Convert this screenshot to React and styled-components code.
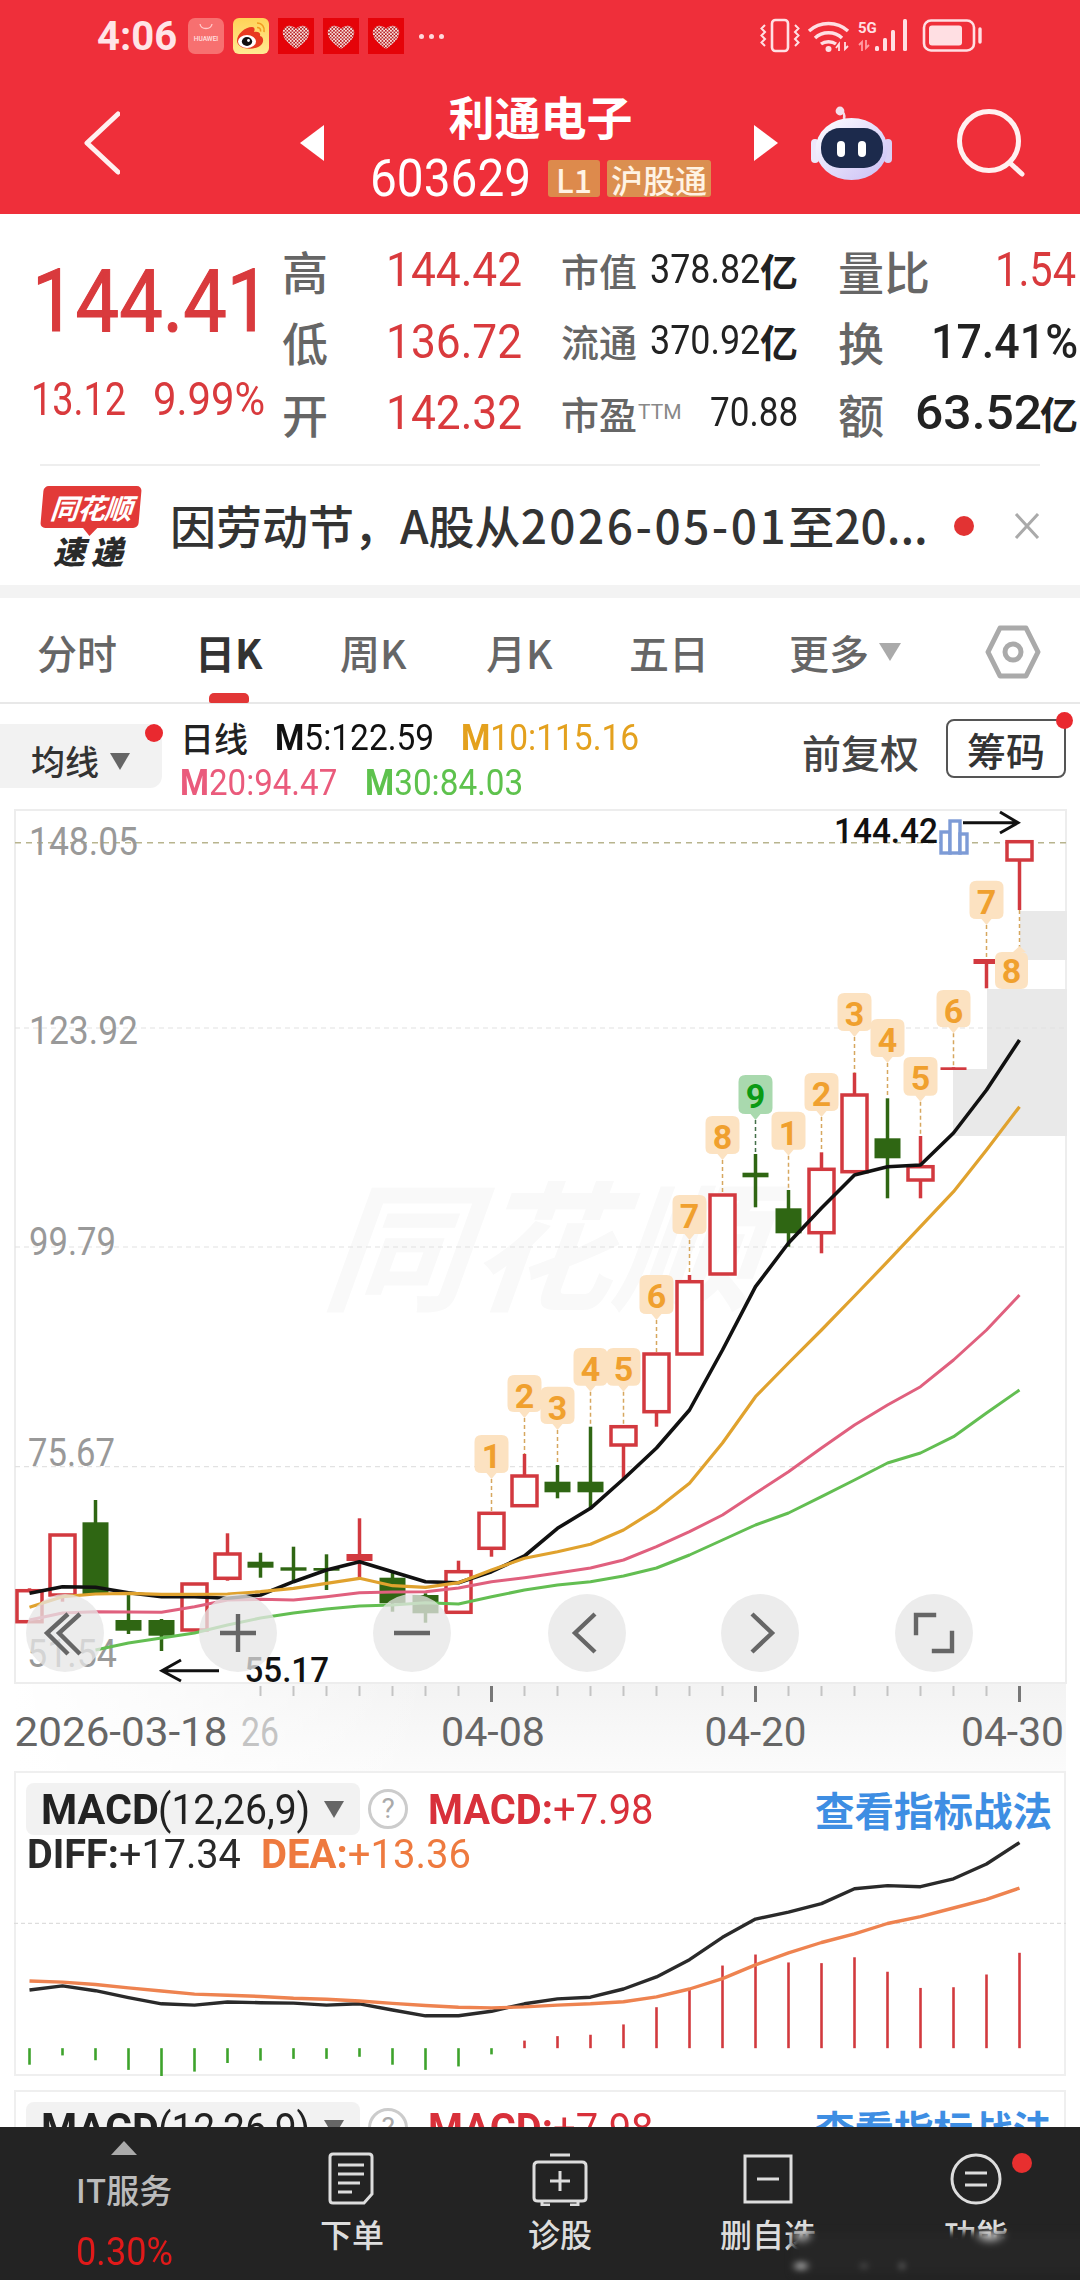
import React from 'react';
import styled, { createGlobalStyle } from 'styled-components';

const NUM = `Roboto, "Noto Sans CJK SC", sans-serif`;
const CJK = `"Noto Sans CJK SC", Roboto, sans-serif`;
const RED = '#D93A3D';

const GlobalStyle = createGlobalStyle`
  html, body { margin: 0; padding: 0; background: #fff; }
  #root { width: 1080px; height: 2280px; overflow: hidden; }
  * { box-sizing: border-box; }
`;

// Roboto advance widths, used to squeeze tall digits into the reference's narrow DIN-like widths.
const ADV = { '.': .263, ',': .196, ':': .242, '+': .568, '-': .276, '%': .732, '(': .342, ')': .348, M: .873, A: .652, C: .651, D: .656, I: .272, F: .553, E: .568 };
const measure = s => [...s].reduce((a, ch) => a + (ADV[ch] ?? .5615), 0);
const FitText = styled.span`
  display: inline-block; flex: none; width: ${p => p.$w}px; white-space: nowrap; transform-origin: left center;
  font: ${p => p.$weight || 400} ${p => p.$size}px/${p => p.$size}px ${NUM}; color: ${p => p.$c || 'inherit'};
  b { font-weight: 700; }
`;
const Fit = ({ t, w, size, c, weight, children }) => (
  <FitText $w={w} $size={size} $c={c} $weight={weight} style={{ transform: `scaleX(${(w / (measure(t) * size)).toFixed(3)})` }}>
    {children || t}
  </FitText>
);

const Page = styled.div`
  width: 1080px; height: 2280px; display: flex; flex-direction: column;
  font-family: ${CJK}; background: #fff; overflow: hidden; position: relative;
`;
const Header = styled.header`background: #EF2F3A; height: 214px; flex: none; display: flex; flex-direction: column;`;
const StatusBar = styled.div`height: 72px; display: flex; align-items: center; padding: 0 96px 0 97px;`;
const Time = styled.span`font: 700 40px Roboto, sans-serif; color: #FFE4E7; width: 91px;`;
const Notifs = styled.div`display: flex; align-items: center; gap: 9px;`;
const NotifSvg = styled.svg`display: block; width: 36px; height: 36px;`;
const MoreDots = styled.span`display: flex; gap: 5px; margin-left: 6px;
  i { display: block; width: 5px; height: 5px; border-radius: 50%; background: #FFD9DC; }`;
const StatusRight = styled.div`margin-left: auto; display: flex; align-items: center;`;
const NavBar = styled.div`height: 142px; display: flex; align-items: center; padding-left: 84px;`;
const Arrow = styled.div`
  width: 0; height: 0; border-top: 18px solid transparent; border-bottom: 18px solid transparent;
  ${p => p.$dir === 'left'
    ? 'border-right: 24px solid #fff; margin-left: 180px;'
    : 'border-left: 24px solid #fff;'}
`;
const TitleBlock = styled.div`width: 430px; align-self: stretch; display: flex; flex-direction: column; align-items: center; padding: 18px 0 0 3px;`;
const Title = styled.div`font-size: 46px; line-height: 50px; font-weight: 700; color: #fff;`;
const CodeRow = styled.div`display: flex; align-items: center; gap: 7px; margin-top: 20px; height: 37px;`;
const CodeGap = styled.i`width: 3px;`;
const Tag = styled.span`
  height: 37px; display: flex; align-items: center; justify-content: center; border-radius: 3px;
  background: ${p => p.$bg}; color: #FFF3E4; font-size: 32px; font-weight: 500; width: ${p => p.$w}px;
`;
const NavIcon = styled.svg`display: block; margin-left: ${p => p.$ml || 0}px; flex: none;`;

const Stats = styled.section`height: 252px; flex: none; display: flex; position: relative; padding-left: 31px;
  &::after { content: ''; position: absolute; left: 40px; right: 40px; bottom: 0; height: 2px; background: #EEE; }`;
const PriceCol = styled.div`width: 251px; display: flex; flex-direction: column; padding-top: 44px;`;
const PriceLine = styled.div`margin-left: 1px; -webkit-text-stroke: 1.2px ${RED}; height: 87px;`;
const PriceSub = styled.div`display: flex; gap: 27px; margin-top: 31px; color: ${RED};`;
const StatGrid = styled.div`display: grid; grid-template-rows: repeat(3, 71.5px); padding-top: 20px;`;
const StatRow = styled.div`display: flex; align-items: center;`;
const StatLabel = styled.span`font-size: 46px; font-weight: 500; color: #666; line-height: 50px; flex: none; width: ${p => p.$w || 104}px;`;
const MidCell = styled.div`width: 237px; margin-left: 39px; display: flex; align-items: center; justify-content: space-between;`;
const MidLabel = styled.span`font-size: 38px; font-weight: 500; color: #666; white-space: nowrap; line-height: 44px;
  sup { font: 400 21px ${NUM}; color: #888; vertical-align: 10px; line-height: 0; margin-left: 1px; }`;
const MidValue = styled.span`display: flex; align-items: center;`;
const MidUnit = styled.b`font: 700 38px/44px ${CJK}; color: #222;`;
const RightCell = styled.div`width: 238px; margin-left: 40px; display: flex; align-items: center; justify-content: space-between;`;
const RightValue = styled.span`display: flex; align-items: center;`;
const Unit = styled.b`font: 700 38px/44px ${CJK}; color: #222; width: 36px;`;

const News = styled.section`height: 119px; flex: none; display: flex; align-items: center; padding-left: 41px;`;
const Logo = styled.div`width: 100px; height: 80px; display: flex; flex-direction: column; align-items: center; flex: none;`;
const LogoTop = styled.div`
  width: 98px; height: 42px; background: #E23A38; border-radius: 5px; transform: skewX(-5deg); position: relative;
  color: #fff; font: italic 700 28px/42px ${CJK}; text-align: center; letter-spacing: -1px; flex: none;
  &::after { content: ''; position: absolute; left: 42px; bottom: -8px; border-top: 9px solid #E23A38;
    border-left: 8px solid transparent; border-right: 8px solid transparent; }
`;
const LogoBottom = styled.div`font: italic 900 32px/32px ${CJK}; color: #2a2a2a; margin-top: 6px; letter-spacing: 6px;`;
const NewsText = styled.div`font-size: 46px; font-weight: 500; color: #333; margin: 0 0 4px 29px; width: 765px; white-space: nowrap; line-height: 50px; flex: none;
  span { letter-spacing: 2.5px; }`;
const NewsDot = styled.i`display: block; width: 20px; height: 20px; border-radius: 50%; background: #E23333; margin-left: 19px; flex: none;`;
const NewsClose = styled.svg`display: block; margin-left: 40px; width: 26px; height: 26px; flex: none;`;
const Band = styled.div`height: 13px; background: #F3F3F3; flex: none;`;

const Tabs = styled.nav`height: 106px; position: relative; border-bottom: 2px solid #E8E8E8; flex: none;`;
const TabRow = styled.div`display: grid; grid-template-columns: 158px 145px 146px 143px 160px 196px auto; height: 104px; padding: 3px 0 0 37px; align-items: center;`;
const Tab = styled.span`font-size: 40px; color: ${p => p.$on ? '#333' : '#666'}; font-weight: ${p => p.$on ? 700 : 500}; display: flex; align-items: center; line-height: 50px;`;
const Caret = styled.i`
  display: inline-block; width: 0; height: 0; border-left: ${p => p.$s || 11}px solid transparent;
  border-right: ${p => p.$s || 11}px solid transparent;
  border-top: ${p => (p.$s || 11) * 1.7}px solid ${p => p.$c || '#AAA'}; margin-left: ${p => p.$ml || 10}px; flex: none;
`;
const Indicator = styled.i`position: absolute; left: 209px; bottom: -1px; width: 40px; height: 10px; background: #E23636; border-radius: 5px 5px 2px 2px;`;

const MARow = styled.div`height: 105px; display: flex; flex: none; position: relative;`;
const MAChip = styled.div`
  width: 162px; height: 64px; margin-top: 20px; background: #F2F2F2; border-radius: 0 12px 12px 0; display: flex; align-items: center;
  padding: 10px 0 0 31px; font-size: 34px; font-weight: 500; color: #333; position: relative; flex: none; line-height: 40px;
`;
const RedDot = styled.i`position: absolute; display: block; width: ${p => p.$s}px; height: ${p => p.$s}px; border-radius: 50%; background: #E9292F; right: ${p => p.$r}px; top: ${p => p.$t}px;`;
const MALegend = styled.div`margin-left: 18px; display: flex; flex-direction: column; padding-top: 11px;`;
const MALine = styled.div`display: flex; gap: ${p => p.$gap}px; height: 45px; align-items: center; white-space: nowrap;`;
const MAName = styled.span`font: 500 34px ${CJK}; color: #222;`;
const Adjust = styled.span`position: absolute; left: 802px; top: 22px; font-size: 39px; line-height: 50px; font-weight: 500; color: #444;`;
const ChipBtn = styled.div`position: absolute; left: 946px; top: 15px; width: 120px; height: 59px; border: 2px solid #555; border-radius: 8px; display: flex; align-items: center; justify-content: center; font-size: 39px; font-weight: 500; color: #333;`;

const ChartArea = styled.div`height: 875px; position: relative; flex: none;`;
const ChartSvg = styled.svg`display: block; width: 1080px; height: 875px;`;
const AxisLabel = styled.text`font: 400 39px ${NUM}; fill: #999;`;
const MarkLabel = styled.text`font: 500 35px Roboto, sans-serif; fill: #111;`;
const BadgeDigit = styled.text`font: 700 34px Roboto, sans-serif; fill: ${p => p.$c}; text-anchor: middle;`;
const Watermark = styled.text`font: italic 700 140px ${CJK}; fill: #F9F9F9;`;
const CircleBtn = styled.div`
  position: absolute; top: 785px; left: ${p => p.$x - 39}px; width: 78px; height: 78px; border-radius: 50%;
  background: rgba(230,230,230,.76); display: flex; align-items: center; justify-content: center;
`;

const AxisRow = styled.div`height: 87px; margin: 0 14px; flex: none;
  background: linear-gradient(90deg, #fff 0, rgba(255,255,255,0) 40%), linear-gradient(#F3F3F3, #FBFBFB);`;
const AxisSvg = styled.svg`display: block; width: 1052px; height: 87px;`;
const AxisDate = styled.text`font: 400 40px Roboto, sans-serif; fill: ${p => p.$c || '#666'};`;

const Panel = styled.section`
  margin: 0 14px ${p => p.$mb || 0}px; height: 305px; position: relative; flex: none;
  box-shadow: inset 0 0 0 2px #EFEFEF; padding: 12px 12px;
`;
const PanelSvg = styled.svg`position: absolute; left: 0; top: 0; width: 1052px; height: 305px;`;
const PanelHead = styled.div`display: flex; align-items: center; position: relative; height: 52px;`;
const MacdChip = styled.div`width: 334px; height: 52px; background: #F2F2F2; border-radius: 8px; display: flex; align-items: center; padding-left: 15px; color: #222; flex: none;`;
const Help = styled.i`width: 40px; height: 40px; border-radius: 50%; border: 3px solid #CCC; color: #AAA; margin-left: 8px; font: normal 400 28px/34px Roboto, sans-serif; text-align: center; flex: none;`;
const MacdVal = styled.span`color: #D8303A; margin-left: 20px; display: block;`;
const Link = styled.span`margin-left: auto; margin-right: 2px; font-size: 39.5px; font-weight: 700; color: #3E8EE3; line-height: 50px;`;
const LegendRow = styled.div`position: relative; display: flex; gap: 22px; height: 44px; align-items: center; margin: -2px 0 0 1px;`;

const Content = styled.main`flex: 1; overflow: hidden; display: flex; flex-direction: column; min-height: 0;`;
const BottomBar = styled.footer`height: 153px; background: #232323; display: grid; grid-template-columns: 248px repeat(4, 208px); position: relative; flex: none; overflow: hidden;`;
const SectorCol = styled.div`display: flex; flex-direction: column; align-items: center; padding-top: 14px;`;
const UpArrow = styled.i`width: 0; height: 0; flex: none; border-left: 13px solid transparent; border-right: 13px solid transparent; border-bottom: 14px solid #AAA;`;
const SectorName = styled.span`font-size: 33px; font-weight: 500; color: #BBB; line-height: 44px; margin-top: 12px;`;
const SectorPct = styled.span`height: 44px; margin-top: 19px; display: flex; align-items: center; width: 97px;`;
const BarItem = styled.div`display: flex; flex-direction: column; align-items: center; padding-top: 25px; position: relative;`;
const BarSvg = styled.svg`display: block; width: 64px; height: 54px; flex: none;`;
const BarLabel = styled.span`font-size: 32px; font-weight: 500; color: #DDD; line-height: 40px; margin-top: 7px;`;
const BarDot = styled.i`position: absolute; left: 140px; top: 26px; width: 20px; height: 20px; border-radius: 50%; background: #E82F2F;`;
const BlurPatch = styled.div`
  position: absolute; left: 792px; top: 105px; width: 300px; height: 42px; filter: blur(3px);
  background:
    radial-gradient(ellipse 18px 11px at 198px 2px, rgba(255,255,255,.85), transparent),
    radial-gradient(ellipse 13px 11px at 10px 2px, rgba(255,255,255,.75), transparent),
    radial-gradient(ellipse 10px 5px at 9px 34px, rgba(255,255,255,.9), transparent),
    radial-gradient(ellipse 5px 3px at 72px 34px, rgba(255,255,255,.4), transparent),
    radial-gradient(ellipse 3px 4px at 110px 34px, rgba(255,255,255,.7), transparent),
    #262626;
`;

const cx = i => 29.5 + 33 * i;
// [type, bodyTop, bodyBottom, wickTop, wickBottom]
const candles = [
  ['r', 1590.7, 1621.7, 1588.3, 1621.7], ['r', 1535, 1595, 1535, 1601.7], ['g', 1522.3, 1595, 1500, 1595],
  ['g', 1620, 1630.7, 1591.7, 1634], ['g', 1620, 1635.7, 1619, 1651], ['r', 1584, 1630, 1584, 1630],
  ['r', 1554, 1578.3, 1533.3, 1580.7], ['g', 1561.7, 1567.7, 1552.7, 1577.7], ['g', 1567.3, 1570.7, 1546.7, 1581.7],
  ['g', 1568, 1570.7, 1554.3, 1590], ['r', 1554, 1561, 1518.3, 1578.3], ['g', 1577.7, 1603.3, 1571, 1611.7],
  ['g', 1595, 1613.3, 1593.3, 1622.7], ['r', 1571.7, 1612.3, 1560.7, 1612.3], ['r', 1513.3, 1548.3, 1513.3, 1556.7],
  ['r', 1476, 1505.7, 1454, 1505.7], ['g', 1481.7, 1492.3, 1465, 1498.3], ['g', 1481.7, 1492.3, 1426.7, 1508.3],
  ['r', 1426.7, 1445, 1426.7, 1479], ['r', 1354, 1411.7, 1354, 1426.7], ['r', 1281.7, 1354, 1275, 1354],
  ['r', 1195, 1274, 1195, 1274], ['g', 1172.7, 1177.3, 1154, 1207.3], ['g', 1208.3, 1233.3, 1190, 1246.7],
  ['r', 1169.3, 1232.7, 1152.3, 1253.3], ['r', 1095, 1171.7, 1072.7, 1171.7], ['g', 1138.3, 1158.3, 1098.3, 1198.3],
  ['r', 1166.7, 1180, 1136, 1198.3], ['r', 1067.3, 1070, 1067.3, 1070], ['r', 959, 964, 959, 988.3], ['r', 841.7, 860, 841.7, 910],
];
const m5 = [1593.3,1586.7,1587.3,1592.7,1596.7,1596.7,1598.3,1595,1581.7,1570,1561.7,1571.7,1581.7,1582.7,1571.7,1556,1528.3,1508.3,1479,1448,1410,1350,1286.7,1243,1208,1175,1166.7,1165,1133,1090,1040];
const m10 = [1607.3,1596.7,1594,1593.3,1594.3,1594.3,1594,1591.7,1588.3,1583.3,1578.3,1585.7,1587.3,1582.7,1570,1558.3,1551.7,1544.3,1530,1509.3,1483.3,1443,1396.7,1363,1330,1296,1261.7,1226.7,1191.7,1150,1106.7];
const m20 = [1620,1613,1611.7,1612,1612.3,1606.7,1600,1599.3,1600,1596.7,1592.7,1592,1591.7,1588,1581.7,1577.7,1573,1568,1560,1546.7,1531.7,1515,1493.3,1471.7,1448,1425,1405,1386.7,1360,1330,1295];
const m30 = [null,null,1650,1643,1638,1633,1625,1618,1613,1609,1606,1605,1602.7,1604,1596.7,1590,1585,1581.7,1576,1568,1555,1540,1525,1513,1496.7,1480,1463,1453,1436.7,1413,1390];
const pts = a => a.map((y, i) => (y == null ? null : `${cx(i)},${y}`)).filter(Boolean).join(' ');

// [digit, candle index, top, tip, dash end, green]
const badges = [
  ['1',14,1435,1479,1513],['2',15,1375,1418,1454],['3',16,1386.7,1430,1465],['4',17,1348,1391.7,1426.7],['5',18,1348,1391.7,1426.7],
  ['6',19,1275,1320,1354],['7',20,1195,1240,1275],['8',21,1116,1160,1195],['9',22,1075,1120,1154,true],['1',23,1111.7,1155.7,1190],
  ['2',24,1073,1117,1152.3],['3',25,993,1037,1072.7],['4',26,1019,1063,1098],['5',27,1057,1101.7,1136],['6',28,990,1033.3,1067],['7',29,880.7,925,959],
];
const badgePath = (x, t, tip) => {
  const b = tip - 6;
  return `M${x-10} ${t}H${x+10}Q${x+17} ${t} ${x+17} ${t+7}V${b-6}Q${x+17} ${b} ${x+10} ${b}H${x+5}L${x} ${tip}L${x-5} ${b}H${x-10}Q${x-17} ${b} ${x-17} ${b-6}V${t+7}Q${x-17} ${t} ${x-10} ${t}Z`;
};

const diff = [728,716,730,750,768,772,763,765,766,772,768,786,803,803,790,768,754,749,725,690,640,575,522,502,477,434,425,428,405,362,300];
const dea = [702,705,712,722,731,740,743,747,752,755,760,767,773,778,780,777,772,768,762,748,725,695,655,620,590,565,535,515,490,465,432];
const bars = [945,918,932,960,978,965,940,933,928,928,922,945,960,950,915,875,862,858,828,778,725,657,625,648,650,633,675,722,720,683,620];
const my = z => 1740 + z / 2.904;
const mpts = a => a.map((z, i) => `${cx(i)},${my(z).toFixed(1)}`).join(' ');

const Candle = ({ d, i }) => {
  const [t, bt, bb, wt, wb] = d;
  const x = cx(i);
  const c = t === 'r' ? '#D2393F' : '#2F6613';
  const solid = t === 'g' || bb - bt < 10;
  return (
    <g>
      <line x1={x} x2={x} y1={wt} y2={wb} stroke={c} strokeWidth="3.5" />
      {solid
        ? <rect x={x - 13} y={bt} width={26} height={bb - bt} fill={c} />
        : <rect x={x - 12.5} y={bt} width={25} height={bb - bt} fill="#fff" stroke={c} strokeWidth="3.5" />}
    </g>
  );
};

const Badge = ({ b }) => {
  const [n, i, t, tip, end, green] = b;
  const x = cx(i);
  return (
    <g>
      <line x1={x} x2={x} y1={tip} y2={end} stroke={green ? '#44704A' : '#D6A75F'} strokeWidth="1.5" strokeDasharray="4 3" />
      <path d={badgePath(x, t, tip)} fill={green ? '#A9D9AE' : '#FCE2C1'} />
      <BadgeDigit x={x} y={t + 33} $c={green ? '#0B9A14' : '#F0A02E'}>{n}</BadgeDigit>
    </g>
  );
};

const Fitted = ({ as: Comp, x, y, w, children, ...rest }) => (
  <Comp x={x} y={y} textLength={w} lengthAdjust="spacingAndGlyphs" {...rest}>{children}</Comp>
);

const HeartTile = () => (
  <NotifSvg viewBox="0 0 36 36">
    <defs>
      <pattern id="hd" width="3.4" height="3.4" patternUnits="userSpaceOnUse">
        <rect width="3.4" height="3.4" fill="#F8E2E2" />
        <rect x="1.8" y="0" width="1.6" height="1.6" fill="#B01010" />
        <rect x="0" y="1.8" width="1.6" height="1.6" fill="#B81010" />
      </pattern>
    </defs>
    <rect width="36" height="36" fill="#E50309" />
    <path d="M18 31C6 23 4 17 5 12.5 6.5 7 14 6 18 11 22 6 29.5 7 31 12.5 32 17 30 23 18 31Z" fill="url(#hd)" />
  </NotifSvg>
);

const BarIcon = ({ children }) => <BarSvg viewBox="0 0 64 54" fill="none" stroke="#DDD" strokeWidth="3">{children}</BarSvg>;

const StatVal = ({ t, w, c }) => <Fit t={t} w={w} size={49} c={c || RED} weight={c ? 500 : 400} />;

const MacdPanel = ({ mb, chart }) => (
  <Panel $mb={mb}>
    {chart && (
      <PanelSvg viewBox="14 1771.7 1052 305">
        <line x1="14" x2="1066" y1="1924" y2="1924" stroke="#DDD" strokeWidth="1.2" strokeDasharray="4 3" />
        {bars.map((z, i) => (
          <line key={i} x1={cx(i)} x2={cx(i)} y1={my(897)} y2={my(z)} stroke={i < 15 ? '#3EA32C' : '#D23A3E'} strokeWidth="2.6" />
        ))}
        <polyline points={mpts(diff)} fill="none" stroke="#2A2A2A" strokeWidth="3.4" strokeLinejoin="round" />
        <polyline points={mpts(dea)} fill="none" stroke="#EE8350" strokeWidth="3.4" strokeLinejoin="round" />
      </PanelSvg>
    )}
    <PanelHead>
      <MacdChip>
        <Fit t="MACD" w={117} size={43} weight={700} />
        <Fit t="(12,26,9)" w={152} size={43} />
        <Caret $s={10} $c="#666" $ml={14} />
      </MacdChip>
      <Help>?</Help>
      <MacdVal><Fit t="MACD:+7.98" w={223} size={43}><b>MACD:</b>+7.98</Fit></MacdVal>
      <Link>查看指标战法</Link>
    </PanelHead>
    <LegendRow>
      <Fit t="DIFF:+17.34" w={212} size={40} c="#2A2A2A"><b>DIFF:</b>+17.34</Fit>
      <Fit t="DEA:+13.36" w={208} size={40} c="#EE7A3F"><b>DEA:</b>+13.36</Fit>
    </LegendRow>
  </Panel>
);

export default function App() {
  return (
    <Page>
      <GlobalStyle />
      <Header>
        <StatusBar>
          <Time>4:06</Time>
          <Notifs>
            <NotifSvg viewBox="0 0 36 36">
              <rect width="36" height="36" rx="7" fill="#F77070" />
              <path d="M12 6C13 12 23 12 24 6" fill="none" stroke="#FFC9C9" strokeWidth="1.3" />
              <text x="18" y="23" textAnchor="middle" fontFamily="Roboto, sans-serif" fontSize="6.6" fontWeight="500" fill="#FFE0E0">HUAWEI</text>
            </NotifSvg>
            <NotifSvg viewBox="0 0 36 36">
              <defs>
                <linearGradient id="wb" x1="0" y1="0" x2="0" y2="1">
                  <stop offset="0" stopColor="#FFD257" /><stop offset="1" stopColor="#FFEB93" />
                </linearGradient>
              </defs>
              <rect width="36" height="36" rx="6" fill="url(#wb)" />
              <path d="M4 23C4 16 12 9 19 9 22 9 22 12 21 14 25 13 28 15 27 18 31 19 31 24 28 27 24 32 5 33 4 23Z" fill="#E83A20" />
              <ellipse cx="14" cy="23.5" rx="9" ry="6.5" fill="#fff" />
              <ellipse cx="14" cy="23.5" rx="5.2" ry="4.4" fill="#111" />
              <circle cx="15.5" cy="22.5" r="1.4" fill="#fff" />
              <path d="M24 5C29 5 32 9 31 14M24 9.5C26.5 9.5 28 11 27.5 13.5" fill="none" stroke="#F29A1F" strokeWidth="1.6" />
            </NotifSvg>
            <HeartTile /><HeartTile /><HeartTile />
            <MoreDots><i /><i /><i /></MoreDots>
          </Notifs>
          <StatusRight>
            <svg width="224" height="36" viewBox="0 0 224 36" fill="none" stroke="#FFDFE3" strokeWidth="2.6">
              <rect x="12" y="2" width="16" height="31" rx="3.5" />
              <path d="M5 7L1.5 10.5 5 14 1.5 17.5 5 21 1.5 24.5 5 28M35 7L38.5 10.5 35 14 38.5 17.5 35 21 38.5 24.5 35 28" strokeWidth="2" />
              <path d="M49 13C60 3 77 3 88 13M55 20C62 13 75 13 82 20M61 26C65 23 72 23 76 26" strokeWidth="3.4" />
              <circle cx="68.5" cy="31" r="3" fill="#FFDFE3" stroke="none" />
              <path d="M79 33V26l-3 4M85 24v7l3-3" strokeWidth="1.8" />
              <text x="98" y="15" fontFamily="Roboto, sans-serif" fontSize="15" fontWeight="700" fill="#FFDFE3" stroke="none">5G</text>
              <path d="M102 33V24l-3 3M106 22v8l3-3" stroke="#FF9CA4" strokeWidth="1.8" />
              <g fill="#FFDFE3" stroke="none">
                <rect x="115" y="28" width="4" height="5" rx="1.5" />
                <rect x="123" y="20" width="4" height="13" rx="1.5" />
                <rect x="131" y="12" width="4" height="21" rx="1.5" />
                <rect x="143" y="1" width="4" height="32" rx="1.5" />
              </g>
              <rect x="164" y="2.5" width="50" height="30" rx="7" />
              <rect x="169" y="7.5" width="33" height="20" rx="3" fill="#FFDFE3" stroke="none" />
              <path d="M220 11V24" strokeWidth="3.4" strokeLinecap="round" />
            </svg>
          </StatusRight>
        </StatusBar>
        <NavBar>
          <NavIcon width="36" height="64" viewBox="0 0 36 64" fill="none" stroke="#FFF0F0" strokeWidth="5" strokeLinecap="round" strokeLinejoin="round">
            <path d="M34 3L3 32 34 61" />
          </NavIcon>
          <Arrow $dir="left" />
          <TitleBlock>
            <Title>利通电子</Title>
            <CodeRow>
              <Fit t="603629" w={161} size={52} c="#fff" />
              <CodeGap />
              <Tag $bg="#DD8A4C" $w={52}>L1</Tag>
              <Tag $bg="#DB8F50" $w={104}>沪股通</Tag>
            </CodeRow>
          </TitleBlock>
          <Arrow $dir="right" />
          <NavIcon $ml={33} width="81" height="74" viewBox="0 0 81 74">
            <defs>
              <linearGradient id="rb" x1="0" y1="0" x2="1" y2="1">
                <stop offset="0" stopColor="#FFFFFF" /><stop offset="1" stopColor="#C9BEF5" />
              </linearGradient>
            </defs>
            <path d="M33 13C34 8 33 6 29 5" fill="none" stroke="#F5DDE8" strokeWidth="2.6" />
            <circle cx="29" cy="5" r="4.4" fill="#F3E0EC" />
            <rect x="0" y="33" width="8" height="24" rx="4" fill="#EDE8FA" />
            <rect x="73" y="33" width="8" height="24" rx="4" fill="#D9D0F5" />
            <ellipse cx="40.5" cy="43" rx="36" ry="31" fill="url(#rb)" />
            <rect x="10" y="22" width="62" height="40" rx="19" fill="#1C2A4C" />
            <rect x="26" y="35" width="8" height="16" rx="4" fill="#fff" />
            <rect x="47" y="35" width="8" height="16" rx="4" fill="#fff" />
          </NavIcon>
          <NavIcon $ml={65} width="68" height="68" viewBox="0 0 68 68" fill="none" stroke="#FFF0F0" strokeWidth="5" strokeLinecap="round">
            <circle cx="32" cy="32" r="29.5" />
            <path d="M53 54L65 65" />
          </NavIcon>
        </NavBar>
      </Header>
      <Content>
        <Stats>
          <PriceCol>
            <PriceLine><Fit t="144.41" w={238} size={87} c={RED} /></PriceLine>
            <PriceSub><Fit t="13.12" w={95} size={46} /><Fit t="9.99%" w={112} size={46} /></PriceSub>
          </PriceCol>
          <StatGrid>
            <StatRow>
              <StatLabel>高</StatLabel><StatVal t="144.42" w={136} />
              <MidCell><MidLabel>市值</MidLabel><MidValue><Fit t="378.82" w={110} size={40} c="#222" /><MidUnit>亿</MidUnit></MidValue></MidCell>
              <RightCell><StatLabel $w={95}>量比</StatLabel><StatVal t="1.54" w={81} /></RightCell>
            </StatRow>
            <StatRow>
              <StatLabel>低</StatLabel><StatVal t="136.72" w={136} />
              <MidCell><MidLabel>流通</MidLabel><MidValue><Fit t="370.92" w={110} size={40} c="#222" /><MidUnit>亿</MidUnit></MidValue></MidCell>
              <RightCell><StatLabel $w={46}>换</StatLabel><StatVal t="17.41%" w={145} c="#222" /></RightCell>
            </StatRow>
            <StatRow>
              <StatLabel>开</StatLabel><StatVal t="142.32" w={136} />
              <MidCell><MidLabel>市盈<sup>TTM</sup></MidLabel><MidValue><Fit t="70.88" w={88} size={40} c="#222" /></MidValue></MidCell>
              <RightCell><StatLabel $w={46}>额</StatLabel><RightValue><StatVal t="63.52" w={125} c="#222" /><Unit>亿</Unit></RightValue></RightCell>
            </StatRow>
          </StatGrid>
        </Stats>
        <News>
          <Logo>
            <LogoTop>同花顺</LogoTop>
            <LogoBottom>速递</LogoBottom>
          </Logo>
          <NewsText>因劳动节，A股从<span>2026-05-01</span>至20...</NewsText>
          <NewsDot />
          <NewsClose viewBox="0 0 26 26" fill="none" stroke="#AAA" strokeWidth="3"><path d="M2 1L24 25M24 1L2 25" /></NewsClose>
        </News>
        <Band />
        <Tabs>
          <TabRow>
            <Tab>分时</Tab><Tab $on>日K</Tab><Tab>周K</Tab><Tab>月K</Tab><Tab>五日</Tab>
            <Tab>更多<Caret $s={11} /></Tab>
            <svg width="56" height="54" viewBox="0 0 56 54" fill="none" stroke="#AAA" strokeWidth="5" strokeLinejoin="round">
              <path d="M15 3H41L53 27 41 51H15L3 27Z" /><circle cx="28" cy="27" r="8" />
            </svg>
          </TabRow>
          <Indicator />
        </Tabs>
        <MARow>
          <MAChip>均线<Caret $s={10} $c="#666" $ml={11} /><RedDot $s={18} $r={-1} $t={0} /></MAChip>
          <MALegend>
            <MALine $gap={27}>
              <MAName>日线</MAName>
              <Fit t="M5:122.59" w={159} size={36} c="#111"><b>M</b>5:122.59</Fit>
              <Fit t="M10:115.16" w={178} size={36} c="#E4A11E"><b>M</b>10:115.16</Fit>
            </MALine>
            <MALine $gap={28}>
              <Fit t="M20:94.47" w={157} size={36} c="#EA5B7C"><b>M</b>20:94.47</Fit>
              <Fit t="M30:84.03" w={158} size={36} c="#5EC24D"><b>M</b>30:84.03</Fit>
            </MALine>
          </MALegend>
          <Adjust>前复权</Adjust>
          <ChipBtn>筹码<RedDot $s={17} $r={-9} $t={-9} /></ChipBtn>
        </MARow>
        <ChartArea>
          <ChartSvg viewBox="0 809 1080 875">
            <rect x="15" y="810" width="1051" height="873" fill="none" stroke="#EDEDED" strokeWidth="2" />
            <Fitted as={Watermark} x="320" y="1300" w="434" transform="translate(137 0) skewX(-6)">同花顺</Fitted>
            <rect x="1020" y="911" width="47" height="49" fill="#E9E9E9" />
            <rect x="987" y="989" width="80" height="80" fill="#E9E9E9" />
            <rect x="953" y="1069" width="114" height="67" fill="#E9E9E9" />
            <line x1="15" x2="1066" y1="842.7" y2="842.7" stroke="#B8B48E" strokeWidth="1.6" strokeDasharray="6 5" />
            {[1028, 1247, 1466.7].map(y => (
              <line key={y} x1="15" x2="1066" y1={y} y2={y} stroke="#E2E2E2" strokeWidth="1.2" strokeDasharray="5 4" />
            ))}
            <Fitted as={AxisLabel} x="29" y="855" w="109">148.05</Fitted>
            <Fitted as={AxisLabel} x="29" y="1044" w="109">123.92</Fitted>
            <Fitted as={AxisLabel} x="29" y="1255" w="87">99.79</Fitted>
            <Fitted as={AxisLabel} x="28" y="1466" w="87">75.67</Fitted>
            <Fitted as={AxisLabel} x="27" y="1667" w="90">51.54</Fitted>
            {candles.map((d, i) => <Candle key={i} d={d} i={i} />)}
            <polyline points={pts(m30)} fill="none" stroke="#63BE52" strokeWidth="3" strokeLinejoin="round" />
            <polyline points={pts(m20)} fill="none" stroke="#E0607E" strokeWidth="3" strokeLinejoin="round" />
            <polyline points={pts(m5)} fill="none" stroke="#111" strokeWidth="3.6" strokeLinejoin="round" />
            <polyline points={pts(m10)} fill="none" stroke="#E0A22E" strokeWidth="3.2" strokeLinejoin="round" />
            {badges.map((b, i) => <Badge key={i} b={b} />)}
            <line x1="1019.5" x2="1019.5" y1="910" y2="947" stroke="#D6A75F" strokeWidth="1.5" strokeDasharray="4 3" />
            <path d="M1019.5 946L1026 952H1021Q1028 952 1028 959V982Q1028 989 1021 989H1002Q995 989 995 982V959Q995 952 1002 952H1013Z" fill="#FCE2C1" />
            <BadgeDigit x="1011.5" y="983" $c="#F0A02E">8</BadgeDigit>
            <Fitted as={MarkLabel} x="834" y="843" w="104">144.42</Fitted>
            <g fill="#fff" stroke="#7D9BD6" strokeWidth="3.4">
              <rect x="941" y="832" width="9" height="21" /><rect x="950" y="821" width="10" height="32" /><rect x="960" y="834" width="7" height="19" />
            </g>
            <path d="M963 822.7H1017M1000 812L1018 822.7 1000 833" fill="none" stroke="#111" strokeWidth="3" />
            <path d="M219 1670.7H163M181 1660L162 1670.7 181 1681" fill="none" stroke="#111" strokeWidth="3" />
            <Fitted as={MarkLabel} x="244.5" y="1682" w="84.5">55.17</Fitted>
          </ChartSvg>
          {[64.7, 238, 412, 586.5, 760, 934].map((x, i) => (
            <CircleBtn key={i} $x={x}>
              <svg width="48" height="48" viewBox="0 0 48 48" fill="none" stroke="#666" strokeWidth="4.4">
                {i === 0 && <path d="M28 5L7 24 28 45M40 5L19 24 40 45" transform="translate(-1 0)" />}
                {i === 1 && <path d="M24 5V43M6 24H42" />}
                {i === 2 && <path d="M6 24H42" />}
                {i === 3 && <path d="M32 5L12 24 32 43" />}
                {i === 4 && <path d="M16 5L36 24 16 43" />}
                {i === 5 && <path d="M24 6H6V24M24 42H42V24" strokeLinecap="square" />}
              </svg>
            </CircleBtn>
          ))}
        </ChartArea>
        <AxisRow>
          <AxisSvg viewBox="14 1684 1052 87">
            {candles.map((_, i) => {
              const big = i === 14 || i === 22 || i === 30;
              return i >= 7 && <line key={i} x1={cx(i)} x2={cx(i)} y1="1686" y2={big ? 1702 : 1696} stroke={big ? '#777' : '#C4C4C4'} strokeWidth={big ? 3 : 2} />;
            })}
            <Fitted as={AxisDate} x="14.5" y="1746" w="213">2026-03-18</Fitted>
            <Fitted as={AxisDate} x="241" y="1746" w="38" $c="#C4C4C4">26</Fitted>
            <Fitted as={AxisDate} x="441" y="1746" w="104">04-08</Fitted>
            <Fitted as={AxisDate} x="704.5" y="1746" w="102">04-20</Fitted>
            <Fitted as={AxisDate} x="961" y="1746" w="103">04-30</Fitted>
          </AxisSvg>
        </AxisRow>
        <MacdPanel mb={14} chart />
        <MacdPanel />
      </Content>
      <BottomBar>
        <SectorCol>
          <UpArrow />
          <SectorName>IT服务</SectorName>
          <SectorPct><Fit t="0.30%" w={97} size={38} c="#E01A1A" /></SectorPct>
        </SectorCol>
        <BarItem>
          <BarIcon>
            <path d="M13 2H49Q52 2 52 5V42L44 51H13Q10 51 10 48V5Q10 2 13 2Z" />
            <path d="M18 13H44M18 22H44M18 31H40M18 40H32" />
          </BarIcon>
          <BarLabel>下单</BarLabel>
        </BarItem>
        <BarItem>
          <BarIcon>
            <path d="M22 3H42M10 10H54Q58 10 58 14V46Q58 49 54 49H10Q6 49 6 46V14Q6 10 10 10ZM32 19V39M22 29H42" />
            <path d="M14 49V53H22M42 53H50V49" />
          </BarIcon>
          <BarLabel>诊股</BarLabel>
        </BarItem>
        <BarItem>
          <BarIcon>
            <rect x="9" y="4" width="46" height="46" />
            <path d="M21 27H43" />
          </BarIcon>
          <BarLabel>删自选</BarLabel>
        </BarItem>
        <BarItem>
          <BarIcon>
            <circle cx="32" cy="27" r="24" />
            <path d="M21 21H43M21 33H43" />
          </BarIcon>
          <BarLabel>功能</BarLabel>
          <BarDot />
        </BarItem>
        <BlurPatch />
      </BottomBar>
    </Page>
  );
}
